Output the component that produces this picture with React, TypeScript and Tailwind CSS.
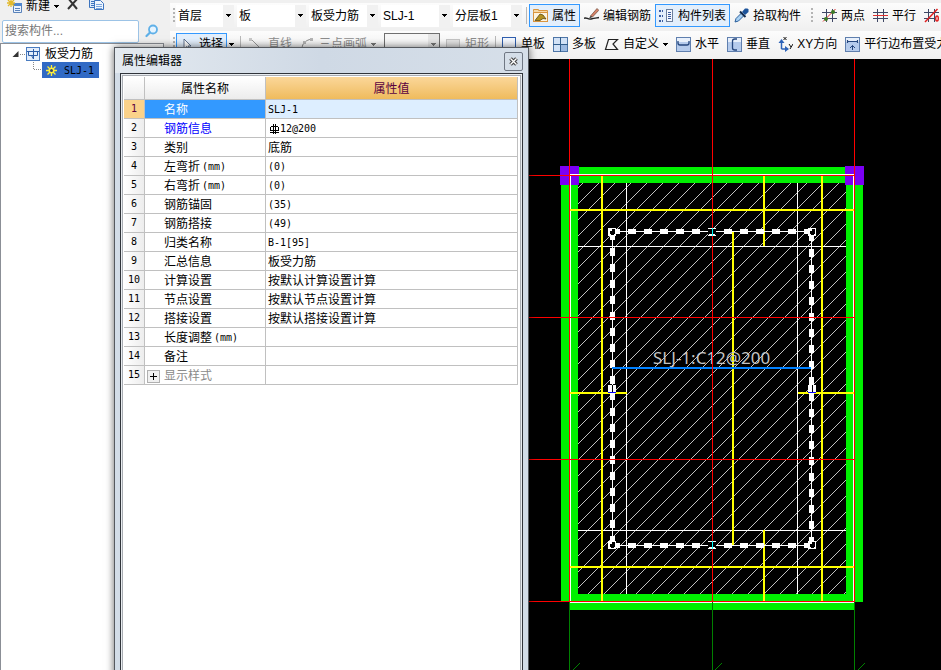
import React from "react";

const ui = "font-['Liberation_Sans','Noto_Sans_CJK_SC',sans-serif]";
const mono = "font-['DejaVu_Sans_Mono',monospace] text-[10px]";

/* ---------- small drawing helpers ---------- */

function Icon({ children, w = 15 }: { children: React.ReactNode; w?: number }) {
  return (
    <svg width={w} height="15" viewBox={`0 0 ${w} 15`} className="shrink-0" aria-hidden="true">
      {children}
    </svg>
  );
}

function Caret({ muted = false }: { muted?: boolean }) {
  return (
    <svg width="5" height="3" viewBox="0 0 5 3" className="shrink-0" shapeRendering="crispEdges" aria-hidden="true">
      <path d="M0 0h5v1h-1v1h-1v1h-1v-1h-1v-1h-1z" fill={muted ? "#777" : "#000"} />
    </svg>
  );
}

function Grip() {
  return (
    <svg width="3" height="15" viewBox="0 0 3 15" className="shrink-0" shapeRendering="crispEdges" aria-hidden="true">
      {[0, 4, 8, 12].map((y) => (
        <rect key={y} x="0" y={y} width="2" height="2" fill="#b4b4b4" />
      ))}
    </svg>
  );
}

function Sep() {
  return <div className="h-[17px] w-px shrink-0 bg-[#b8b8b8]" />;
}

/* ---------- icons ---------- */

const blueBox = (
  <>
    <rect x="0.5" y="0.5" width="14" height="14" fill="#b5cbec" stroke="#5f7fae" />
    <path d="M1 1h13v4H1z" fill="#e8f0fb" />
  </>
);

const PropertyIcon = () => (
  <Icon>
    <path d="M0.5 3.5V1.500h5v1h9v3H0.5z" fill="#f5d9a8" stroke="#d9953f" />
    <rect x="0.5" y="4.5" width="14" height="9" fill="#fdf3df" stroke="#d9953f" />
    <path d="M2 12.500l5-6.500 3 1 3 4-3-.5-3 2z" fill="#b49120" stroke="#5c4a10" strokeWidth="0.8" />
  </Icon>
);
const EditRebarIcon = () => (
  <Icon>
    <path d="M0 10.500c2-2 4 1.500 7 .5 3-.8 5-1 8-1.500" fill="none" stroke="#222" strokeWidth="1.400" />
    <path d="M6.500 8l6.500-7.500 1.800 1.800L8.500 9z" fill="#d78268" stroke="#6a4a3a" strokeWidth="0.700" />
    <path d="M5 10.500l1.500-2.500 2 1z" fill="#333" />
  </Icon>
);
const ListIcon = () => (
  <Icon>
    <path d="M0 2h2v2H0zM0 7h2v2H0zM0 12h2v2H0zM3 2h1v2H3zM3 7h1v2H3zM3 12h1v2H3z" fill="#3c5da0" />
    <rect x="7.500" y="1.500" width="6" height="12" fill="#f4f8ff" stroke="#6c7f9c" />
    <path d="M9 4.500h3M9 6.500h3M9 8.500h3M9 10.500h3" stroke="#3c5da0" />
  </Icon>
);
const PickIcon = () => (
  <Icon>
    <path d="M1 14l1-3.500 5.500-5.500 2.500 2.500L4.500 13z" fill="#a9d1f3" stroke="#2b5f9c" />
    <path d="M6 3.500L11.500 9" stroke="#152d4f" strokeWidth="2" />
    <path d="M8 4l3-3.500h2.500l1 1V4L11 7z" fill="#1d549b" />
  </Icon>
);
const GridLines = () => (
  <path d="M4.500 1v13M10.500 1v13M0 4.500h15M0 10.500h15" stroke="#3e4664" fill="none" />
);
const TwoPointIcon = () => (
  <Icon>
    <GridLines />
    <path d="M1 13.500L13.500 1" stroke="#e03030" />
    <circle cx="4" cy="11" r="2" fill="#3d7c26" />
    <circle cx="11" cy="4" r="2" fill="#3d7c26" />
  </Icon>
);
const ParallelIcon = () => (
  <Icon>
    <GridLines />
    <path d="M0 7.500h15" stroke="#e03030" />
  </Icon>
);
const AngleIcon = () => (
  <Icon>
    <GridLines />
    <path d="M1 14L13.500 1" stroke="#e02020" strokeWidth="1.500" />
    <ellipse cx="13" cy="10.500" rx="1.300" ry="2.500" fill="#fff" stroke="#e02020" strokeWidth="1.400" />
  </Icon>
);
const CursorIcon = () => (
  <Icon w={9}>
    <path d="M1 2v10l2.500-2.500L5 13l1.500-.7L5 9h3z" fill="#fff" stroke="#3f5474" strokeWidth="0.8" />
  </Icon>
);
const LineIcon = () => (
  <Icon>
    <path d="M2 2l11 11" stroke="#999" />
    <path d="M0 1h3v3H0z" fill="#c8c8c8" />
  </Icon>
);
const ArcIcon = () => (
  <Icon>
    <path d="M2 12C2 6 6 3 12 2" fill="none" stroke="#888" />
    <path d="M10 1h3v3h-3zM3 4h3v3H3zM1 11h2v3H1z" fill="#b5b5b5" />
  </Icon>
);
const RectIcon = () => (
  <Icon>
    <rect x="0.500" y="2.500" width="13" height="11" fill="#e4e4e4" stroke="#c4c4c4" />
  </Icon>
);
const SinglePlateIcon = () => (
  <Icon>
    <rect x="0.500" y="0.500" width="13" height="14" fill="#f4f8ff" stroke="#305fae" />
  </Icon>
);
const MultiPlateIcon = () => (
  <Icon>
    <rect x="0.500" y="0.500" width="14" height="14" fill="#d2e2f6" stroke="#4e76a8" />
    <path d="M8 8h6v6H8z" fill="#9dbbe2" />
    <path d="M7.500 0v15M0 7.500h15" stroke="#315d8b" />
  </Icon>
);
const PolygonIcon = () => (
  <Icon>
    <path d="M4.500 2.500h9L9 7l4.500 5.500h-12L4.500 2.500z" fill="none" stroke="#222" strokeWidth="1.200" />
  </Icon>
);
const HorizontalIcon = () => (
  <Icon>
    {blueBox}
    <path d="M2 4v2q0 2 2 2h7q2 0 2-2V4" fill="none" stroke="#26477e" strokeWidth="1.300" />
  </Icon>
);
const VerticalIcon = () => (
  <Icon>
    {blueBox}
    <path d="M10 2H8Q5.500 2 5.500 4v7q0 2 2.500 2h2" fill="none" stroke="#26477e" strokeWidth="1.300" />
  </Icon>
);
const XYIcon = () => (
  <Icon>
    <path d="M3.500 12V4M3.500 12H10" stroke="#2c62b8" strokeWidth="1.500" />
    <path d="M0.500 6l3-4 3 4zM7 9l4 3-4 3z" fill="#2c62b8" />
    <path d="M5.500 0l3 3M8.500 0l-3 3M11 7l2 3M15 7l-3 5" stroke="#111" />
  </Icon>
);
const ParallelEdgeIcon = () => (
  <Icon>
    {blueBox}
    <path d="M2.500 3v3M12.500 3v3M2 4.500h11" fill="none" stroke="#26477e" strokeWidth="1.200" />
    <path d="M7.500 13V8.500M5 11l2.500-2.500L10 11" fill="none" stroke="#26477e" />
  </Icon>
);

/* ---------- toolbar parts ---------- */

function Tool({
  icon,
  label,
  active = false,
  muted = false,
  caret = false,
}: {
  icon: React.ReactNode;
  label: string;
  active?: boolean;
  muted?: boolean;
  caret?: boolean;
}) {
  return (
    <button
      type="button"
      disabled={muted}
      className={`flex h-[23px] shrink-0 items-center gap-1 whitespace-nowrap ${
        active ? "border border-[#3399ff] bg-[#e3effc] px-[3px]" : ""
      } ${muted ? "text-[#8d8d8d]" : "text-black"}`}
    >
      {icon}
      <span>{label}</span>
      {caret && <Caret muted={muted} />}
    </button>
  );
}

function Drop({ label, value, width }: { label: string; value: string; width: string }) {
  return (
    <div className={`relative flex h-[22px] shrink-0 bg-white ${width}`}>
      <select aria-label={label} className="w-full appearance-none bg-transparent pr-3 pl-0.5 text-black outline-none">
        <option>{value}</option>
      </select>
      <span className="pointer-events-none absolute inset-y-0 right-0 flex w-[11px] items-center justify-center bg-[#f1f1f1]">
        <Caret />
      </span>
    </div>
  );
}

function Toolbars() {
  return (
    <header className="flex h-[59px] shrink-0 flex-col justify-between overflow-hidden bg-[#f0f0f0] pt-[3px] pb-0.5 text-[12px] leading-4">
      <div className="flex h-[25px] items-center bg-linear-to-b from-[#fcfcfc] to-[#f1f1f1] pl-[3px]">
        <Grip />
        <div className="flex items-center gap-[3px]">
          <Drop label="楼层" value="首层" width="w-[58px]" />
          <Drop label="构件类型" value="板" width="w-[69px]" />
          <Drop label="构件" value="板受力筋" width="w-[69px]" />
          <Drop label="名称" value="SLJ-1" width="w-[69px]" />
          <Drop label="分层" value="分层板1" width="w-[69px]" />
        </div>
        <div className="ml-1 flex items-center gap-0.5">
          <Sep />
          <div className="flex items-center gap-1">
            <Tool icon={<PropertyIcon />} label="属性" active />
            <Tool icon={<EditRebarIcon />} label="编辑钢筋" />
            <Tool icon={<ListIcon />} label="构件列表" active />
            <Tool icon={<PickIcon />} label="拾取构件" />
          </div>
        </div>
        <div className="ml-2.5 flex items-center gap-2">
          <Grip />
          <Tool icon={<TwoPointIcon />} label="两点" />
          <Tool icon={<ParallelIcon />} label="平行" />
          <button type="button" aria-label="点角">
            <AngleIcon />
          </button>
        </div>
      </div>
      <div className="flex h-[26px] items-center bg-linear-to-b from-[#fcfcfc] to-[#f1f1f1] pl-[3px]">
        <Grip />
        <button
          type="button"
          className="flex h-[23px] w-[51px] shrink-0 items-center justify-between border border-[#3399ff] bg-[#e3effc] pr-[3px] pl-1.5"
        >
          <CursorIcon />
          <span>选择</span>
        </button>
        <div className="ml-0.5 flex items-center gap-2">
          <div className="flex items-center gap-1.5">
            <Caret />
            <Sep />
          </div>
          <Tool icon={<LineIcon />} label="直线" muted />
          <Tool icon={<ArcIcon />} label="三点画弧" muted caret />
          <div className="flex items-center gap-1.5">
            <div className="relative flex h-[22px] w-[56px] shrink-0 border border-[#6f6f6f] bg-[#f7f7f7]">
              <select aria-label="画弧方式" disabled className="w-full appearance-none bg-transparent">
                <option></option>
              </select>
              <span className="absolute inset-y-0 right-0 flex w-[11px] items-center justify-center bg-[#e6e6e6]">
                <Caret muted />
              </span>
            </div>
            <Tool icon={<RectIcon />} label="矩形" muted />
            <Sep />
            <Tool icon={<SinglePlateIcon />} label="单板" />
          </div>
          <Tool icon={<MultiPlateIcon />} label="多板" />
          <Tool icon={<PolygonIcon />} label="自定义" caret />
          <Tool icon={<HorizontalIcon />} label="水平" />
          <Tool icon={<VerticalIcon />} label="垂直" />
          <Tool icon={<XYIcon />} label="XY方向" />
          <Tool icon={<ParallelEdgeIcon />} label="平行边布置受力筋" />
        </div>
      </div>
    </header>
  );
}

/* ---------- component tree ---------- */

function Sidebar() {
  return (
    <aside className="flex w-[164px] shrink-0 flex-col bg-[#f0f0f0]">
      <div className="flex h-[19px] items-start overflow-hidden pl-[7px] text-[12px] leading-3">
        <button type="button" className="flex h-3 shrink-0 items-center gap-1">
          <Icon>
            <path d="M6.500 4.500h8v9h-8z" fill="#eaf2fd" stroke="#5a83bb" />
            <path d="M6 4h9v3H6z" fill="#4f86cf" />
            <path d="M8 9.500h5M8 11.500h5" stroke="#5a83bb" />
            <path d="M4 0v8M0 4h8M1 1l6 6M7 1L1 7" stroke="#e2b92b" strokeWidth="1.300" />
          </Icon>
          <span>新建</span>
          <Caret />
        </button>
        <button type="button" aria-label="删除" className="-mt-1 ml-2">
          <svg width="12" height="15" viewBox="0 0 12 15">
            <path d="M1 2l9 11M11 2L1 13" stroke="#333" strokeWidth="2" />
          </svg>
        </button>
        <button type="button" aria-label="复制" className="-mt-1 ml-2.5">
          <Icon>
            <path d="M0.500 2.500h8v9h-8z" fill="#dceafb" stroke="#3d74be" />
            <path d="M2 5.500h4M2 7.500h4M2 9.500h4" stroke="#3d74be" />
            <path d="M5.500 4.500h6l3 3v6h-9z" fill="#eef5fe" stroke="#3d74be" />
            <path d="M7 8.500h6M7 10.500h6M7 12.500h6" stroke="#7aa5dc" />
          </Icon>
        </button>
      </div>
      <form className="flex h-[24px] shrink-0 items-center pl-0.5" onSubmit={(e) => e.preventDefault()}>
        <input
          type="text"
          aria-label="搜索构件"
          placeholder="搜索构件..."
          className="h-[23px] min-w-0 flex-1 rounded-xs border border-[#9cc3e6] bg-white px-0.5 text-[12px] outline-none placeholder:text-[#777]"
        />
        <button type="submit" aria-label="搜索" className="flex w-[25px] justify-center">
          <svg width="14" height="14" viewBox="0 0 14 14">
            <circle cx="8" cy="5.500" r="4" fill="#e6f4ff" stroke="#5fb0e8" strokeWidth="1.800" />
            <path d="M5 8.500L1.500 12" stroke="#5fb0e8" strokeWidth="2.200" strokeLinecap="round" />
          </svg>
        </button>
      </form>
      <div className="flex-1 border border-b-0 border-[#8b8f96] bg-white pt-0.5 text-[12px]">
        <ul>
          <li>
            <div className="flex h-4 items-center pl-2.5">
              <svg width="14" height="14" viewBox="0 0 14 14">
                <path d="M7.500 4v6H1.500z" fill="#333" />
                <path d="M9 7.500h5" stroke="#888" strokeDasharray="1 1" />
              </svg>
              <svg width="14" height="14" viewBox="0 0 14 14" className="ml-px">
                <rect x="0.500" y="0.500" width="13" height="13" fill="#e4eefb" stroke="#4a7cc0" />
                <path d="M1 4.500h12M2.500 4.500v4h9v-4M5.500 8.500L7.500 12M7.500 2v10" fill="none" stroke="#2c5ca6" />
              </svg>
              <span className="ml-[5px]">板受力筋</span>
            </div>
            <ul>
              <li className="flex h-4 items-center pl-8">
                <svg width="9" height="16" viewBox="0 0 9 16">
                  <path d="M0.500 0v7.500H9" fill="none" stroke="#888" strokeDasharray="1 1" />
                </svg>
                <span className="flex h-4 w-[57px] items-center bg-[#316ac5] pl-1">
                  <svg width="11" height="11" viewBox="0 0 11 11">
                    <g stroke="#ffef3a" strokeWidth="1.300" fill="none">
                      <path d="M5.500 0v11M0 5.500h11M1.500 1.500l8 8M9.500 1.500l-8 8" />
                    </g>
                    <circle cx="5.500" cy="5.500" r="3" fill="#ffef3a" />
                    <circle cx="5.500" cy="5.500" r="1.500" fill="#35456b" />
                  </svg>
                  <span className={`ml-[7px] text-black ${mono}`}>SLJ-1</span>
                </span>
              </li>
            </ul>
          </li>
        </ul>
      </div>
    </aside>
  );
}

/* ---------- property window ---------- */

type Row = { name: string; unit?: string; code?: string; text?: string; tone?: string };

const rows: Row[] = [
  { name: "名称", code: "SLJ-1" },
  { name: "钢筋信息", code: "12@200", tone: "text-[#0000ff]" },
  { name: "类别", text: "底筋" },
  { name: "左弯折", unit: "(mm)", code: "(0)" },
  { name: "右弯折", unit: "(mm)", code: "(0)" },
  { name: "钢筋锚固", code: "(35)" },
  { name: "钢筋搭接", code: "(49)" },
  { name: "归类名称", code: "B-1[95]" },
  { name: "汇总信息", text: "板受力筋" },
  { name: "计算设置", text: "按默认计算设置计算" },
  { name: "节点设置", text: "按默认节点设置计算" },
  { name: "搭接设置", text: "按默认搭接设置计算" },
  { name: "长度调整", unit: "(mm)" },
  { name: "备注" },
  { name: "显示样式", tone: "text-[#8a8a8a]" },
];

function RebarMark() {
  return (
    <svg width="12" height="10" viewBox="0 0 12 10" className="shrink-0" shapeRendering="crispEdges" aria-hidden="true">
      <path d="M5.500 0v10M7.500 0v10M2 8.500h9M2.500 3v4M10.500 3v4M3 2.500h7M3 6.500h7" stroke="#000" fill="none" />
    </svg>
  );
}

function PropertyWindow() {
  const line = "border-r border-b border-[#c0c0c0]";
  return (
    <section
      aria-label="属性编辑器"
      className="absolute top-[47px] -bottom-2 left-[114px] flex w-[415px] flex-col border border-[#55595f] bg-[#d2dce7] px-[5px] shadow-[0_0_8px_rgba(0,0,0,0.6)]"
    >
      <div className="-mx-[5px] flex h-[25px] shrink-0 items-center justify-between bg-linear-to-r from-[#e4eaf0] via-[#cfd9e5] to-[#d6dfe9] pr-[5px] pl-[7px]">
        <h2 className="text-[12px]">属性编辑器</h2>
        <button
          type="button"
          aria-label="关闭"
          className="mt-0.5 flex h-[19px] w-[19px] items-center justify-center rounded-xs border border-[#6f7783] bg-[#d5dee8]"
        >
          <svg width="9" height="9" viewBox="0 0 9 9">
            <path d="M1.500 1.500l6 6M7.500 1.500l-6 6" stroke="#444" strokeWidth="3.600" />
            <path d="M1.500 1.500l6 6M7.500 1.500l-6 6" stroke="#fff" strokeWidth="1.400" />
          </svg>
        </button>
      </div>
      <div className="flex-1 border border-[#30343a] bg-[#e8ecf0] p-px">
        <div className="h-full border border-[#a9adb3] bg-white pt-px pr-0.5 pl-px">
          <table className="w-full table-fixed border-separate border-spacing-0 text-[12px] leading-4">
            <colgroup>
              <col className="w-[21px]" />
              <col className="w-[121px]" />
              <col />
            </colgroup>
            <thead>
              <tr className="h-[23px]">
                <th aria-label="序号" className={`bg-linear-to-b from-white to-[#ededed] p-0 ${line}`} />
                <th className={`bg-linear-to-b from-white to-[#ececec] p-0 pt-0.5 font-normal ${line}`}>属性名称</th>
                <th className={`bg-linear-to-b from-[#fbd799] to-[#efbb5c] p-0 pt-0.5 font-normal text-[#5a0040] ${line}`}>
                  属性值
                </th>
              </tr>
            </thead>
            <tbody>
              {rows.map((r, i) => (
                <tr key={r.name} className="h-[19px]">
                  <th
                    scope="row"
                    className={`p-0 text-center font-normal ${mono} ${line} ${
                      i === 0 ? "bg-[#fbd28a] text-[#5a0040]" : "bg-linear-to-r from-white to-[#ededed]"
                    }`}
                  >
                    {i + 1}
                  </th>
                  <td className={`p-0 ${line} ${i === 0 ? "bg-[#3399ff] text-white" : r.tone ?? ""}`}>
                    <div className="flex h-[18px] items-center pt-0.5">
                      <span className="flex w-[19px] shrink-0 pl-0.5">
                        {r.name === "显示样式" && (
                          <button type="button" aria-label="展开">
                            <svg width="13" height="13" viewBox="0 0 13 13" shapeRendering="crispEdges">
                              <rect x="0.500" y="0.500" width="12" height="12" fill="#f0f0f0" stroke="#b0b0b0" />
                              <path d="M3 6.500h7M6.500 3v7" stroke="#000" />
                            </svg>
                          </button>
                        )}
                      </span>
                      <span>{r.name}</span>
                      {r.unit && <span className={`ml-0.5 ${mono}`}>{r.unit}</span>}
                    </div>
                  </td>
                  <td className={`p-0 ${line} ${i === 0 ? "bg-[#ddeeff]" : ""}`}>
                    <div className="flex h-[18px] items-center pt-0.5 pl-0.5">
                      {r.name === "钢筋信息" && <RebarMark />}
                      {r.code && <span className={mono}>{r.code}</span>}
                      {r.text && <span>{r.text}</span>}
                    </div>
                  </td>
                </tr>
              ))}
            </tbody>
          </table>
        </div>
      </div>
    </section>
  );
}

/* ---------- drawing canvas ---------- */

const hatch: number[] = [];
for (let s = 750; s < 1450; s += 16) hatch.push(s);

function Handle({ x, y }: { x: number; y: number }) {
  return (
    <g>
      <rect x={x} y={y} width="8" height="8" fill="#fff" />
      <path d={`M${x + 4} ${y + 1}h3v5h-1v1h-3v-1h-1v-3h2z`} fill="#000" />
    </g>
  );
}

function EdgeHandle({ x, y }: { x: number; y: number }) {
  return (
    <g>
      <rect x={x} y={y} width="8" height="8" fill="#000" />
      <path d={`M${x} ${y}h8v1h-8zM${x} ${y + 7}h1v-1h6v1h1v1h-8z`} fill="#fff" />
      <rect x={x + 4} y={y} width="1" height="8" fill="#00ffff" />
    </g>
  );
}

function SideHandle({ x, y }: { x: number; y: number }) {
  return (
    <g>
      <rect x={x} y={y} width="8" height="7" fill="#fff" />
      <path d={`M${x + 4} ${y}h1v7h-1z`} fill="#000" />
      <rect x={x} y={y + 7} width="8" height="1" fill="#0000ff" />
    </g>
  );
}

function Drawing() {
  return (
    <main className="min-h-0 flex-1 overflow-hidden bg-black">
      <svg width="771" height="611" viewBox="170 59 771 611" shapeRendering="crispEdges" role="img" aria-label="板配筋图">
        <clipPath id="slab">
          <rect x="578" y="183" width="268" height="411" />
        </clipPath>
        <g clipPath="url(#slab)" stroke="#c0c0c0" strokeWidth="1">
          {hatch.map((s) => (
            <line key={s} x1={s - 600} y1="600" x2={s - 180} y2="180" />
          ))}
        </g>
        <g fill="#00f000">
          <rect x="579" y="167" width="267" height="16" />
          <rect x="561" y="185" width="17" height="416" />
          <rect x="846" y="185" width="17" height="417" />
          <rect x="570" y="594" width="285" height="16" />
        </g>
        <g fill="#7b00f5">
          <rect x="560" y="166" width="19" height="19" />
          <rect x="845" y="166" width="19" height="19" />
        </g>
        <g fill="#fff">
          <rect x="570" y="174" width="284" height="1" />
          <rect x="570" y="602" width="284" height="1" />
          <rect x="570" y="174" width="1" height="429" />
          <rect x="853" y="174" width="1" height="429" />
          <rect x="626" y="183" width="1" height="411" />
          <rect x="797" y="183" width="1" height="411" />
          <rect x="578" y="246" width="268" height="1" />
          <rect x="578" y="530" width="268" height="1" />
        </g>
        <g fill="#ff0">
          <rect x="601" y="176" width="2" height="425" />
          <rect x="821" y="176" width="2" height="425" />
          <rect x="763" y="176" width="2" height="70" />
          <rect x="763" y="530" width="2" height="71" />
          <rect x="732" y="232" width="2" height="313" />
          <rect x="570" y="209" width="284" height="2" />
          <rect x="570" y="566" width="284" height="2" />
          <rect x="570" y="392" width="57" height="2" />
          <rect x="798" y="392" width="56" height="2" />
        </g>
        <g stroke="#fff" fill="none">
          <rect x="612.500" y="231.500" width="199" height="314" />
          <g strokeWidth="5" strokeDasharray="8 8">
            <path d="M612 231.500H808" />
            <path d="M612 545.500H808" />
            <path d="M612.500 232V544" />
            <path d="M811.500 233V544" />
          </g>
        </g>
        <rect x="612" y="367" width="199" height="2" fill="#0080ff" />
        <text x="653" y="364" fontSize="17" fill="#c4c4c4" className="font-['Noto_Sans',sans-serif]">
          SLJ-1:C12@200
        </text>
        <g fill="#f00">
          <rect x="569" y="59" width="1" height="542" />
          <rect x="712" y="59" width="1" height="542" />
          <rect x="854" y="59" width="1" height="542" />
          <rect x="170" y="175" width="685" height="1" />
          <rect x="170" y="317" width="685" height="1" />
          <rect x="170" y="459" width="685" height="1" />
          <rect x="170" y="601" width="685" height="1" />
        </g>
        <g fill="#008000">
          <rect x="569" y="602" width="1" height="68" />
          <rect x="712" y="602" width="1" height="68" />
          <rect x="854" y="602" width="1" height="68" />
        </g>
        <path d="M573 670l7-7M715 670l7-7M858 670l7-7" stroke="#008000" />
        <Handle x={608} y={228} />
        <Handle x={808} y={228} />
        <Handle x={608} y={541} />
        <Handle x={808} y={541} />
        <EdgeHandle x={708} y={228} />
        <EdgeHandle x={708} y={541} />
        <SideHandle x={608} y={385} />
        <SideHandle x={808} y={385} />
      </svg>
    </main>
  );
}

export default function App() {
  return (
    <div className={`relative flex h-screen overflow-hidden bg-[#f0f0f0] text-black ${ui}`}>
      <Sidebar />
      <div className="ml-1.5 flex min-w-0 flex-1 flex-col">
        <Toolbars />
        <Drawing />
      </div>
      <PropertyWindow />
    </div>
  );
}
